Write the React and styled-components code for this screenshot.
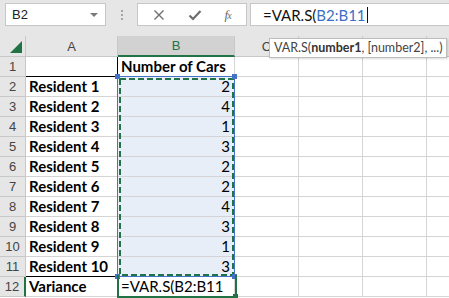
import React from 'react';
import styled, { createGlobalStyle } from 'styled-components';

const GlobalStyle = createGlobalStyle`
  html, body {
    margin: 0;
    padding: 0;
    background: #ffffff;
  }
  body {
    font-family: 'Lato', 'Liberation Sans', sans-serif;
  }
`;

const Page = styled.div`
  position: relative;
  width: 449px;
  height: 298px;
  overflow: hidden;
  background: #ffffff;
`;

const TopBar = styled.div`
  height: 36px;
  box-sizing: border-box;
  background: #e6e6e6;
  display: flex;
  align-items: flex-start;
  padding: 3px 0 0 5px;
`;

const Box = styled.div`
  height: 23px;
  box-sizing: border-box;
  background: #ffffff;
  border: 1px solid #c6c6c6;
  display: flex;
  align-items: center;
`;

const NameBox = styled(Box)`
  width: 101px;
  padding: 0 6px;
  justify-content: space-between;
  font-family: 'Liberation Sans', sans-serif;
  font-size: 13px;
  color: #222;
`;

const DropArrow = styled.span`
  width: 0;
  height: 0;
  border-left: 4px solid transparent;
  border-right: 4px solid transparent;
  border-top: 4px solid #7a7a7a;
  margin-right: 1px;
`;

const Grip = styled.div`
  width: 31px;
  height: 23px;
  display: flex;
  flex-direction: column;
  align-items: center;
  justify-content: center;
  gap: 2px;

  span {
    width: 2px;
    height: 2px;
    background: #a6a6a6;
  }
`;

const ButtonBox = styled(Box)`
  width: 110px;
  justify-content: space-around;
  padding: 0 4px;
  margin-right: 3px;
`;

const Fx = styled.span`
  font-family: 'Liberation Serif', serif;
  font-style: italic;
  font-size: 13px;
  color: #6a6a6a;
  letter-spacing: -1px;

  small {
    font-size: 10px;
  }
`;

const FormulaBox = styled(Box)`
  flex: 1;
  border-right: none;
  padding-left: 12px;
  font-size: 15px;
  color: #111;
`;

const Ref = styled.span`
  color: ${(p) => p.$color || '#3b70c4'};
`;

const Caret = styled.span`
  display: inline-block;
  width: 1px;
  height: 16px;
  background: #111;
  margin-left: 1px;
  vertical-align: -3px;
`;

const Sheet = styled.div`
  position: relative;
  display: grid;
  grid-template-columns: 26px 92px 117px repeat(4, 64px);
  grid-template-rows: 21px repeat(12, 20px);
`;

const Cell = styled.div`
  box-sizing: border-box;
  border-right: 1px solid ${(p) => (p.$blackRight ? '#000' : '#d4d4d4')};
  border-bottom: 1px solid ${(p) => (p.$blackBottom ? '#000' : '#d4d4d4')};
  background: ${(p) => (p.$shade ? '#e8eef8' : '#ffffff')};
  font-size: 15px;
  line-height: 19px;
  color: #000;
  font-weight: ${(p) => (p.$bold ? 700 : 400)};
  text-align: ${(p) => (p.$right ? 'right' : 'left')};
  padding: 0 ${(p) => (p.$right ? '4px' : '0')} 0 3px;
  white-space: nowrap;
  overflow: visible;
`;

const Header = styled.div`
  box-sizing: border-box;
  background: ${(p) => (p.$active ? '#d2d2d2' : '#e6e6e6')};
  border-right: ${(p) => (p.$rowActive ? '2px solid #217346' : '1px solid #c8c8c8')};
  border-bottom: ${(p) => (p.$colActive ? '2px solid #217346' : '1px solid #c8c8c8')};
  color: ${(p) => (p.$colActive ? '#217346' : '#444')};
  font-family: 'Liberation Sans', sans-serif;
  font-size: 13px;
  display: flex;
  align-items: center;
  justify-content: center;
`;

const Corner = styled(Header)`
  justify-content: flex-end;
  align-items: flex-end;
  padding: 0 3px 3px 0;
`;

const Triangle = styled.span`
  width: 0;
  height: 0;
  border-left: 12px solid transparent;
  border-bottom: 12px solid #217346;
`;

const RangeFrame = styled.div`
  position: absolute;
  left: 117px;
  top: 40px;
  width: 118px;
  height: 201px;
  box-sizing: border-box;
  border: 1px solid #4472c4;
  pointer-events: none;

  svg {
    position: absolute;
    inset: 0;
    overflow: visible;
  }
`;

const Handle = styled.span`
  position: absolute;
  width: 5px;
  height: 5px;
  background: ${(p) => p.$color || '#4472c4'};
  ${(p) => (p.$top ? 'top: -3px;' : 'bottom: -3px;')}
  ${(p) => (p.$left ? 'left: -3px;' : 'right: -3px;')}
`;

const ActiveCell = styled.div`
  position: absolute;
  left: 117px;
  top: 239px;
  width: 120px;
  height: 23px;
  box-sizing: border-box;
  border: 2px solid #217346;
  border-top: none;
  pointer-events: none;
`;

const Tooltip = styled.div`
  position: absolute;
  left: 269px;
  top: 38px;
  width: 178px;
  height: 20px;
  box-sizing: border-box;
  background: #ffffff;
  border: 1px solid #bdbdbd;
  box-shadow: 1px 1px 2px rgba(0, 0, 0, 0.15);
  font-family: 'Lato', sans-serif;
  font-size: 12.5px;
  color: #444;
  padding-left: 4px;
  line-height: 18px;
  white-space: nowrap;
  overflow: hidden;

  b {
    color: #333;
  }
`;

const residents = [2, 4, 1, 3, 2, 2, 4, 3, 1, 3];
const emptyCols = 4;

const Cross = () => (
  <svg width="12" height="12" viewBox="0 0 12 12">
    <path d="M1.5 1.5 L10.5 10.5 M10.5 1.5 L1.5 10.5" stroke="#6e6e6e" strokeWidth="1.4" fill="none" />
  </svg>
);

const Check = () => (
  <svg width="14" height="12" viewBox="0 0 14 12">
    <path d="M1.5 6.5 L5 10 L12.5 2" stroke="#6e6e6e" strokeWidth="2.2" fill="none" />
  </svg>
);

const Blanks = () =>
  Array.from({ length: emptyCols }).map((_, i) => <Cell key={i} />);

const App = () => {
  return (
    <Page>
      <GlobalStyle />
      <TopBar>
        <NameBox>
          B2
          <DropArrow />
        </NameBox>
        <Grip>
          <span />
          <span />
          <span />
        </Grip>
        <ButtonBox>
          <Cross />
          <Check />
          <Fx>
            f<small>x</small>
          </Fx>
        </ButtonBox>
        <FormulaBox>
          =VAR.S(<Ref>B2:B11</Ref>
          <Caret />
        </FormulaBox>
      </TopBar>

      <Sheet>
        <Corner>
          <Triangle />
        </Corner>
        <Header>A</Header>
        <Header $active $colActive>
          B
        </Header>
        <Header>C</Header>
        <Header>D</Header>
        <Header>E</Header>
        <Header>F</Header>

        <Header>1</Header>
        <Cell $blackRight $blackBottom />
        <Cell $bold $blackBottom>
          Number of Cars
        </Cell>
        <Blanks />

        {residents.map((n, i) => (
          <React.Fragment key={i}>
            <Header>{i + 2}</Header>
            <Cell $bold $blackBottom={i === residents.length - 1}>
              Resident {i + 1}
            </Cell>
            <Cell $shade $right $blackBottom={i === residents.length - 1}>
              {n}
            </Cell>
            <Blanks />
          </React.Fragment>
        ))}

        <Header $rowActive>12</Header>
        <Cell $bold>Variance</Cell>
        <Cell>=VAR.S(B2:B11</Cell>
        <Blanks />

        <RangeFrame>
          <svg width="116" height="199">
            <rect
              x="2"
              y="2"
              width="113"
              height="196"
              fill="none"
              stroke="#217346"
              strokeWidth="2"
              strokeDasharray="6 3"
            />
          </svg>
          <Handle $top $left />
          <Handle $top />
          <Handle $left />
          <Handle />
        </RangeFrame>

        <ActiveCell>
          <Handle $color="#217346" />
        </ActiveCell>
      </Sheet>

      <Tooltip>
        VAR.S(<b>number1</b>, [number2], ...)
      </Tooltip>
    </Page>
  );
};

export default App;
